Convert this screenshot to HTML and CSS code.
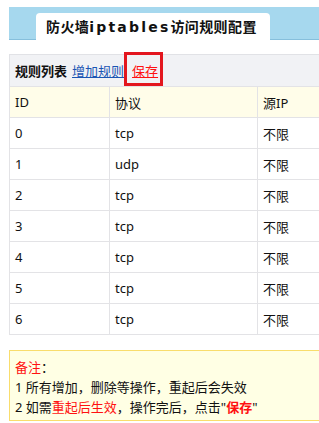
FILE: index.html
```html
<!DOCTYPE html>
<html>
<head>
<meta charset="utf-8">
<link rel="stylesheet" href="styles.css">
</head>
<body>
<div class="page">
  <div class="band">
    <div class="tab">防火墙<span class="latin">iptables</span>访问规则配置</div>
  </div>
  <div class="toolbar">
    <b class="label">规则列表</b>
    <a class="link add" href="#">增加规则</a>
    <span class="save-wrap"><a class="link save" href="#">保存</a><span class="mark"></span></span>
  </div>
  <table class="rules">
    <tr class="head"><td class="c1">ID</td><td class="c2">协议</td><td class="c3">源IP</td></tr>
    <tr><td>0</td><td>tcp</td><td>不限</td></tr>
    <tr><td>1</td><td>udp</td><td>不限</td></tr>
    <tr><td>2</td><td>tcp</td><td>不限</td></tr>
    <tr><td>3</td><td>tcp</td><td>不限</td></tr>
    <tr><td>4</td><td>tcp</td><td>不限</td></tr>
    <tr><td>5</td><td>tcp</td><td>不限</td></tr>
    <tr><td>6</td><td>tcp</td><td>不限</td></tr>
  </table>
  <div class="note">
    <div><span class="red">备注</span>：</div>
    <div>1 所有增加，删除等操作，重起后会失效</div>
    <div>2 如需<span class="red">重起后生效</span>，操作完后，点击"<b class="red">保存</b>"</div>
  </div>
</div>
</body>
</html>
```
FILE: styles.css
```css
html, body {
  margin: 0;
  padding: 0;
  overflow: hidden;
  background: #fff;
}
body {
  font-family: "Noto Sans", "Noto Sans CJK SC", sans-serif;
  font-size: 13px;
  color: #111;
}
.page {
  padding: 7px 0 0 9px;
  width: 420px;
}
.band {
  height: 32px;
  background: #a6d8ee;
  border-bottom: 1px solid #86bfdc;
  padding-left: 27px;
  display: flex;
  align-items: flex-end;
}
.tab {
  width: 224px;
  height: 27px;
  margin-bottom: -1px;
  padding-left: 10px;
  background: #fff;
  border-radius: 4px 4px 0 0;
  font-family: "Noto Sans CJK SC", sans-serif;
  font-weight: bold;
  font-size: 14px;
  line-height: 27px;
  letter-spacing: 0.4px;
  color: #111;
  white-space: nowrap;
}
.latin {
  font-family: "DejaVu Sans", sans-serif;
  letter-spacing: 2.2px;
}
.toolbar {
  margin-top: 14px;
  height: 31px;
  background: #f1f2f5;
  border-top: 1px solid #e1e2e6;
  border-left: 1px solid #e1e2e6;
  padding-left: 5px;
  display: flex;
  align-items: center;
  gap: 5px;
  font-family: "Noto Sans CJK SC", sans-serif;
}
.label {
  font-weight: bold;
}
.link {
  text-decoration: underline;
}
.add {
  color: #1a55b3;
}
.save {
  color: #f11;
  margin-left: 3px;
}
.save-wrap {
  position: relative;
}
.mark {
  position: absolute;
  left: -5px;
  top: -9px;
  width: 33px;
  height: 28px;
  border: 3px solid #e3161e;
}
.rules {
  border-collapse: collapse;
  width: 420px;
}
.rules td {
  border: 1px solid #e3e3e6;
  padding: 0 0 0 5px;
  box-sizing: border-box;
  height: 31px;
  vertical-align: middle;
}
.rules .c1 { width: 100px; }
.rules .c2 { width: 148px; }
.head td {
  background: #fffde9;
}
.note {
  margin-top: 15px;
  border: 1px solid #f9dd6c;
  background: #ffffe4;
  padding: 6px 5px 3px;
  line-height: 20px;
}
.red {
  color: #f11;
}
```
